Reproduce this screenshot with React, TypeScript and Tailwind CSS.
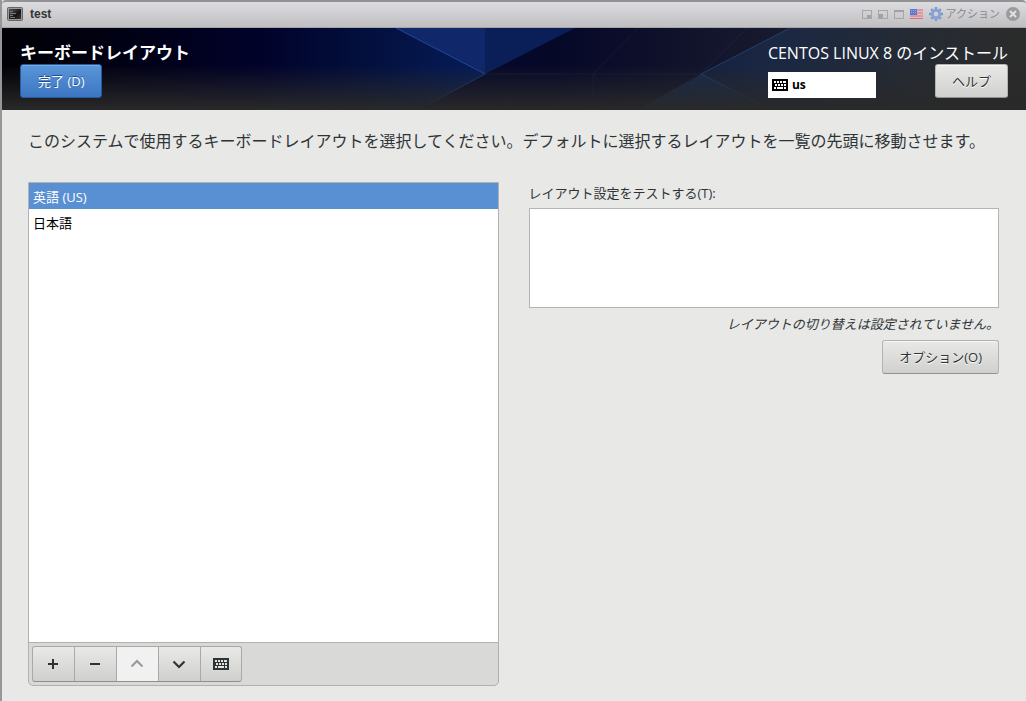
import type { ButtonHTMLAttributes } from 'react'

function KeyboardIcon() {
  return (
    <svg width="16" height="12" viewBox="0 0 16 12" shapeRendering="crispEdges" aria-hidden="true">
      <rect width="16" height="12" rx="1" fill="currentColor" />
      <path
        className="fill-[var(--key)]"
        d="M2 2h2v2h-2zM5 2h2v2h-2zM8 2h2v2h-2zM11 2h3v2h-3zM3 5h2v2h-2zM6 5h2v2h-2zM9 5h2v2h-2zM12 5h2v2h-2zM2 8h2v2h-2zM5 8h6v2h-6zM12 8h2v2h-2z"
      />
    </svg>
  )
}

function TerminalIcon() {
  return (
    <svg width="16" height="14" viewBox="0 0 16 14" aria-hidden="true">
      <defs>
        <linearGradient id="term" x1="0" y1="0" x2="1" y2="1">
          <stop offset="0" stopColor="#555" />
          <stop offset="0.6" stopColor="#161616" />
          <stop offset="1" stopColor="#333" />
        </linearGradient>
      </defs>
      <rect x="0.5" y="0.5" width="15" height="13" rx="1" fill="#999" stroke="#666" />
      <rect x="2" y="2" width="12" height="10" fill="url(#term)" />
      <path d="M3 4.5h3M3 6.5h6M3 8.5h3M3 10.5h5" stroke="#777" />
    </svg>
  )
}

function GearIcon() {
  return (
    <svg width="14" height="14" viewBox="0 0 14 14" aria-hidden="true">
      <g stroke="#7d98c6" strokeWidth="2.4">
        <path d="M7 0v14M0 7h14M2.200 2.200l9.600 9.600M11.800 2.200l-9.600 9.600" />
      </g>
      <circle cx="7" cy="7" r="5.2" fill="#86a3d6" />
      <circle cx="7" cy="7" r="2.3" fill="#d0d2d8" />
    </svg>
  )
}

function FlagIcon() {
  return (
    <svg width="13" height="10" viewBox="0 0 13 10" aria-hidden="true">
      <rect width="13" height="10" fill="#e2bcc0" />
      <path d="M0 1h13M0 4h13M0 7h13M0 9.5h13" stroke="#d5747c" />
      <rect width="7" height="6" fill="#5f7bd0" />
      <path d="M1 1.5h5M1 3.5h5" stroke="#93a8e2" strokeDasharray="1 1" />
    </svg>
  )
}

function WindowIcon({ d }: { d: string }) {
  return (
    <svg width="10" height="9" viewBox="0 0 10 9" shapeRendering="crispEdges" aria-hidden="true">
      <path d="M0.5 0.5h9v8h-9z" fill="none" stroke="#a7a7a9" />
      <path d={d} fill="#a2a2a4" />
    </svg>
  )
}

function BannerArt() {
  return (
    <svg
      className="absolute inset-0 h-full w-full"
      viewBox="0 0 1024 82"
      preserveAspectRatio="none"
      aria-hidden="true"
    >
      <defs>
        <linearGradient id="base" x1="0" x2="1" y1="0" y2="0">
          <stop offset="0" stopColor="#010106" />
          <stop offset="0.14" stopColor="#010118" />
          <stop offset="0.25" stopColor="#01022a" />
          <stop offset="0.36" stopColor="#03103e" />
          <stop offset="0.47" stopColor="#061c58" />
          <stop offset="0.56" stopColor="#0a1c52" />
          <stop offset="0.68" stopColor="#16203f" />
          <stop offset="0.76" stopColor="#1b2843" />
          <stop offset="0.9" stopColor="#262b33" />
          <stop offset="1" stopColor="#2b2b2b" />
        </linearGradient>
        <linearGradient id="dark" gradientUnits="userSpaceOnUse" x1="430" x2="790" y1="0" y2="0">
          <stop offset="0" stopColor="#05082a" />
          <stop offset="0.35" stopColor="#060828" />
          <stop offset="1" stopColor="#191c2e" />
        </linearGradient>
        <linearGradient id="fade" x1="0" x2="0" y1="0" y2="1">
          <stop offset="0.45" stopColor="#292929" stopOpacity="0" />
          <stop offset="1" stopColor="#292929" />
        </linearGradient>
      </defs>
      <rect width="1024" height="82" fill="url(#base)" />
      <path d="M394 0L483 46V0z" fill="#10286a" />
      <path d="M483 0h90L483 46z" fill="#0a1f58" />
      <path d="M573 0L483 46L415 82H635L699 46L788 0z" fill="url(#dark)" />
      <path d="M699 46L635 82H765z" fill="#1a3258" opacity="0.5" />
      <path d="M394 0L483 46" fill="none" stroke="#2450b0" opacity="0.8" />
      <path d="M483 46L425 77" fill="none" stroke="#2a5aa0" opacity="0.6" />
      <path d="M788 0L699 46L760 77" fill="none" stroke="#2a5590" opacity="0.6" />
      <path d="M483 46H699M636 0L591 46L625 82M745 0L699 46V82M591 46V70" fill="none" stroke="#253f75" opacity="0.25" />
      <rect width="1024" height="82" fill="url(#fade)" />
    </svg>
  )
}

const buttonTones = {
  plain:
    'px-4 border-[#b3b3af] border-b-[#92928e] from-[#e9e9e7] to-[#d0d0ce] text-[#2e3436] shadow-[inset_0_1px_#f6f6f5] [text-shadow:0_1px_#fff]',
  primary:
    'px-[17px] border-[#255a9c] from-[#5a95d9] to-[#3c76c2] text-white shadow-[inset_0_1px_#78aae3] [text-shadow:0_-1px_#1d4f8c]',
}

function GtkButton({
  tone = 'plain',
  ...props
}: ButtonHTMLAttributes<HTMLButtonElement> & { tone?: keyof typeof buttonTones }) {
  return (
    <button
      type="button"
      className={`h-[34px] rounded-[3px] border bg-linear-to-b pt-0.5 text-[13px] ${buttonTones[tone]}`}
      {...props}
    />
  )
}

const toolClass =
  'flex h-full w-[42px] items-center justify-center border-r border-[#a9a9a6] pr-px text-[#2e3436] [--key:#e4e4e2] last:w-10 last:border-r-0 last:pr-0 disabled:bg-[#f1f1f1] disabled:text-[#999b9b]'

export default function App() {
  return (
    <div className="min-h-screen border-l-2 border-[#96979a] bg-[#e8e8e7] font-['Open_Sans','Noto_Sans_CJK_JP',sans-serif] text-[#2e3436]">
      <div className="flex h-7 items-center justify-between rounded-t border-t-2 border-b border-t-[#929293] border-b-[#a5a5a7] bg-linear-to-b from-[#dddde1] to-[#bfbfc2] pr-1.5 pb-px pl-[5px]">
        <div className="flex items-center gap-[7px]">
          <TerminalIcon />
          <span className="font-['Liberation_Sans',sans-serif] text-xs font-bold text-[#333]">test</span>
        </div>
        <div className="flex items-center gap-1.5">
          <button type="button" aria-label="縮小"><WindowIcon d="M5 5h4v3H5z" /></button>
          <button type="button" aria-label="元のサイズ"><WindowIcon d="M1 4h4v4H1z" /></button>
          <button type="button" aria-label="最大化"><WindowIcon d="M0 0h10v2H0z" /></button>
          <button type="button" aria-label="キーボード言語"><FlagIcon /></button>
          <button type="button" className="flex items-center gap-[3px] text-[11px] leading-4 text-[#8a8a8d]">
            <GearIcon />
            アクション
          </button>
          <button type="button" aria-label="閉じる">
            <svg width="14" height="14" viewBox="0 0 14 14" aria-hidden="true">
              <circle cx="7" cy="7" r="7" fill="#9b9b9d" />
              <path d="M4 4l6 6M10 4l-6 6" stroke="#e2e2e4" strokeWidth="2" />
            </svg>
          </button>
        </div>
      </div>

      <header className="relative h-[82px] bg-[#101020]">
        <BannerArt />
        <div className="relative flex justify-between px-[18px] pt-3.5 text-white">
          <div className="flex flex-col items-start">
            <h1 className="text-[17px] leading-[22px] font-bold">キーボードレイアウト</h1>
            <GtkButton tone="primary">完了 (D)</GtkButton>
          </div>
          <div>
            <p className="text-base leading-[22px]">CENTOS LINUX 8 のインストール</p>
            <div className="flex items-end justify-between">
              <div className="flex h-[26px] w-[108px] items-center gap-1 bg-white px-1 text-xs font-bold text-black [--key:#fff]">
                <KeyboardIcon />
                us
              </div>
              <GtkButton>ヘルプ</GtkButton>
            </div>
          </div>
        </div>
      </header>

      <main className="pt-5 pr-[27px] pl-[26px]">
        <p className="text-base leading-[22px]">
          このシステムで使用するキーボードレイアウトを選択してください。デフォルトに選択するレイアウトを一覧の先頭に移動させます。
        </p>
        <div className="mt-[30px] grid grid-cols-2 gap-[30px]">
          <section className="rounded-b-[5px] border border-[#b1b1ae] bg-[#d9d9d7]">
            <ul className="h-[459px] bg-white text-[13px] leading-6 text-black">
              <li className="bg-[#5890d3] px-1 pt-0.5 text-white">英語 (US)</li>
              <li className="px-1 pt-0.5">日本語</li>
            </ul>
            <div className="border-t border-[#b1b1ae] p-[3px]">
              <div className="inline-flex h-9 overflow-hidden rounded-[3px] border border-[#a9a9a6] border-b-[#8f8f8b] bg-linear-to-b from-[#e9e9e7] to-[#cfcfcd] align-top">
                <button type="button" aria-label="追加" className={toolClass}>
                  <svg width="12" height="12" viewBox="0 0 12 12"><path d="M1 6h10M6 1v10" stroke="currentColor" strokeWidth="2" /></svg>
                </button>
                <button type="button" aria-label="削除" className={toolClass}>
                  <svg width="12" height="12" viewBox="0 0 12 12"><path d="M1 6h10" stroke="currentColor" strokeWidth="2" /></svg>
                </button>
                <button type="button" aria-label="上へ" disabled className={toolClass}>
                  <svg width="14" height="12" viewBox="0 0 14 12"><path d="M1.5 8.5L7 3l5.500 5.500" fill="none" stroke="currentColor" strokeWidth="2.200" /></svg>
                </button>
                <button type="button" aria-label="下へ" className={toolClass}>
                  <svg width="14" height="12" viewBox="0 0 14 12"><path d="M1.500 3.500L7 9l5.500-5.500" fill="none" stroke="currentColor" strokeWidth="2.200" /></svg>
                </button>
                <button type="button" aria-label="プレビュー" className={toolClass}>
                  <KeyboardIcon />
                </button>
              </div>
            </div>
          </section>
          <section className="flex flex-col items-end text-[13px]">
            <label htmlFor="layout-test" className="self-start leading-[22px]">レイアウト設定をテストする(T):</label>
            <textarea id="layout-test" className="mt-1 h-[100px] w-full resize-none border border-[#b4b4b0] bg-white p-1 outline-none" />
            <p className="my-1.5 leading-5 italic">レイアウトの切り替えは設定されていません。</p>
            <GtkButton>オプション(O)</GtkButton>
          </section>
        </div>
      </main>
    </div>
  )
}
